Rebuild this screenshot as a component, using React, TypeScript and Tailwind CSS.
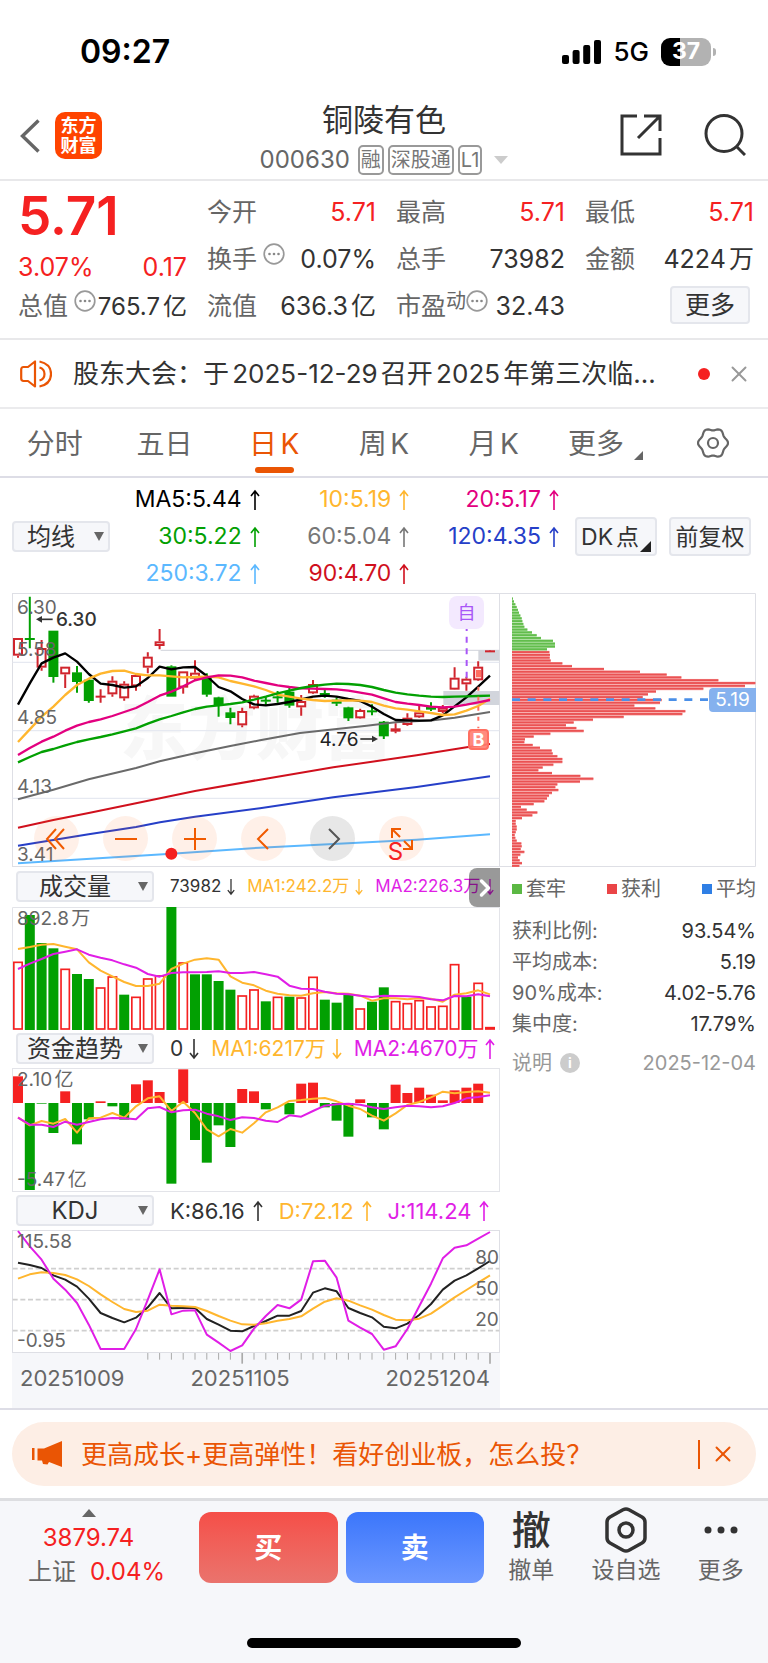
import { useState } from "react";
import type { ReactNode } from "react";
import { X, ChevronRight } from "lucide-react";

// horizontal distance between two trading days, in chart units (3 units = 1px)
const STEP = 35.4;
const xAt = (i: number) => 54 + STEP * i;

const UP = "#d0252d";
const DOWN = "#02a002";

type Candle = [dir: "u" | "d", high: number, top: number, bottom: number, low: number];

const candles: Candle[] = [
  ["u", 144, 144, 197, 203],
  ["d", 20, 145, 149, 175],
  ["u", 150, 174, 233, 242],
  ["d", 123, 123, 260, 278],
  ["u", 230, 230, 253, 294],
  ["d", 228, 248, 275, 308],
  ["d", 268, 270, 332, 338],
  ["u", 298, 318, 322, 338],
  ["u", 259, 272, 313, 320],
  ["u", 274, 281, 325, 332],
  ["u", 250, 255, 289, 302],
  ["u", 187, 200, 233, 250],
  ["u", 117, 154, 168, 178],
  ["d", 226, 230, 319, 319],
  ["u", 244, 244, 293, 311],
  ["u", 211, 248, 266, 270],
  ["d", 250, 262, 313, 320],
  ["d", 320, 323, 346, 380],
  ["d", 353, 368, 383, 403],
  ["u", 353, 363, 406, 412],
  ["u", 314, 317, 355, 358],
  ["d", 320, 330, 334, 345],
  ["d", 303, 320, 324, 338],
  ["d", 290, 306, 346, 353],
  ["u", 315, 333, 352, 377],
  ["u", 270, 282, 310, 312],
  ["d", 296, 310, 314, 323],
  ["d", 322, 330, 340, 348],
  ["d", 350, 353, 384, 393],
  ["u", 356, 360, 385, 386],
  ["d", 343, 362, 366, 376],
  ["d", 393, 396, 438, 447],
  ["u", 400, 416, 424, 430],
  ["u", 370, 383, 405, 407],
  ["u", 347, 367, 382, 384],
  ["d", 337, 352, 358, 363],
  ["u", 345, 353, 366, 370],
  ["u", 232, 263, 299, 300],
  ["u", 260, 266, 283, 302],
  ["u", 214, 230, 271, 273],
  ["u", 181, 182, 186, 186],
];

const ma5 = [
  344, 280, 220, 203, 190, 215, 252, 281, 285, 293, 289, 264, 230, 238, 232, 231, 258, 291, 304, 327, 343, 346, 342,
  336, 328, 320, 317, 320, 327, 333, 350, 372, 390, 391, 392, 391, 376, 349, 322, 290, 257,
];
const ma10 = [
  456, 418, 380, 350, 315, 285, 266, 251, 243, 242, 252, 256, 256, 259, 262, 261, 260, 262, 273, 281, 289, 300, 314,
  320, 326, 330, 333, 332, 331, 332, 336, 347, 355, 359, 364, 369, 375, 373, 362, 348, 326,
];
const ma20 = [
  495, 474, 455, 440, 422, 407, 396, 388, 378, 366, 354, 336, 317, 305, 289, 271, 262, 256, 257, 262, 272, 279, 286,
  291, 295, 296, 297, 298, 302, 308, 314, 325, 336, 341, 345, 350, 352, 350, 344, 337, 330,
];
const ma30 = [
  517, 501, 486, 477, 466, 456, 448, 441, 433, 424, 415, 401, 388, 378, 367, 357, 350, 346, 342, 337, 329, 320, 310,
  302, 294, 288, 284, 281, 282, 285, 291, 300, 308, 313, 317, 320, 321, 320, 319, 318, 317,
];

const volumes: ["u" | "d", number][] = [
  ["u", 275], ["d", 135], ["d", 219], ["d", 235], ["u", 296], ["d", 312], ["d", 327], ["u", 352], ["u", 319],
  ["d", 374], ["u", 380], ["u", 325], ["u", 316], ["d", 111], ["u", 277], ["d", 313], ["d", 313], ["d", 333],
  ["d", 359], ["u", 376], ["u", 358], ["d", 394], ["u", 380], ["d", 380], ["u", 382], ["u", 320], ["d", 389],
  ["d", 398], ["d", 374], ["u", 415], ["d", 395], ["d", 352], ["u", 393], ["u", 399], ["u", 390], ["u", 409],
  ["u", 407], ["u", 282], ["d", 380], ["u", 338], ["u", 471],
];
const volMa1 = [
  237, 231, 224, 222, 230, 238, 277, 302, 319, 336, 348, 348, 341, 297, 281, 269, 265, 269, 319, 338, 346, 362, 371,
  376, 377, 370, 366, 370, 371, 377, 392, 385, 385, 388, 385, 386, 395, 374, 370, 361, 373,
];
const volMa2 = [
  297, 281, 267, 252, 245, 238, 254, 263, 271, 283, 293, 312, 320, 309, 307, 307, 306, 304, 309, 309, 306, 313, 320,
  347, 356, 357, 365, 371, 373, 377, 381, 377, 378, 379, 381, 388, 391, 378, 379, 373, 379,
];

const funds = [
  621, 962, 703, 791, 666, 825, 750, 696, 711, 751, 645, 633, 668, 943, 600, 812, 880, 768, 833, 659, 666, 720, 701,
  735, 643, 640, 714, 754, 802, 690, 744, 780, 646, 671, 655, 676, 693, 663, 655, 643, 701,
];
const fundMa1 = [
  744, 768, 755, 763, 749, 790, 747, 745, 731, 745, 711, 687, 681, 725, 697, 731, 780, 801, 779, 790, 762, 729, 714,
  695, 692, 688, 686, 696, 709, 719, 739, 754, 732, 707, 698, 684, 667, 672, 668, 666, 670,
];
const fundMa2 = [
  745, 766, 766, 773, 757, 766, 758, 750, 746, 747, 750, 717, 713, 729, 723, 721, 733, 741, 752, 744, 746, 754, 758,
  738, 742, 725, 709, 705, 703, 706, 714, 719, 714, 709, 711, 714, 711, 701, 687, 683, 678,
];

const kLine = [
  219, 226, 235, 257, 270, 291, 327, 370, 385, 398, 384, 353, 310, 356, 355, 355, 388, 405, 423, 425, 409, 394, 378,
  378, 364, 309, 296, 305, 355, 370, 383, 411, 416, 402, 376, 343, 300, 273, 257, 236, 214,
];
const dLine = [
  267, 254, 248, 250, 256, 269, 289, 314, 337, 358, 367, 363, 345, 348, 350, 352, 364, 379, 393, 404, 405, 401, 393,
  388, 380, 357, 336, 326, 333, 347, 360, 376, 390, 392, 387, 372, 348, 323, 301, 279, 257,
];
const jLine = [
  124, 170, 210, 267, 300, 340, 405, 478, 478, 478, 418, 330, 239, 374, 363, 362, 435, 459, 484, 467, 417, 379, 346,
  356, 330, 215, 213, 264, 393, 414, 433, 480, 470, 418, 350, 282, 206, 174, 167, 147, 127,
];

// cost distribution, top price first; the first 19 rows are above the current price
const costs = [
  39, 42, 46, 50, 54, 57, 61, 65, 67, 70, 73, 82, 96, 110, 123, 159, 165, 165, 141, 148, 150, 149, 152, 187, 216, 312,
  420, 500, 544, 655, 766, 735, 610, 468, 444, 428, 485, 480, 403, 466, 556, 547, 371, 279, 221, 198, 229, 251, 151,
  101, 75, 73, 98, 120, 155, 158, 172, 187, 187, 160, 128, 115, 156, 241, 280, 240, 172, 166, 175, 156, 147, 141, 133,
  101, 63, 80, 112, 97, 66, 47, 47, 50, 50, 47, 44, 46, 50, 64, 65, 62, 73, 61, 54, 59, 66, 58,
];

const gearPath =
  Array.from({ length: 72 }, (_, i) => {
    const a = (i * 5 * Math.PI) / 180;
    const r = 13.8 + 1.2 * Math.cos(6 * a);
    return `${i ? "L" : "M"}${(16 + r * Math.cos(a)).toFixed(2)} ${(16 + r * Math.sin(a)).toFixed(2)}`;
  }).join("") + "Z";

const Series = ({ data, color, width = 6 }: { data: number[]; color: string; width?: number }) => (
  <polyline
    points={data.map((y, i) => `${xAt(i)},${y}`).join(" ")}
    fill="none"
    stroke={color}
    strokeWidth={width}
    strokeLinejoin="round"
  />
);

const Arrow = ({ down = false, className = "h-6 w-[10px]" }: { down?: boolean; className?: string }) => (
  <svg viewBox="0 0 10 24" className={className} fill="none" stroke="currentColor" strokeWidth="1.6">
    {down ? <path d="M5 2v19M1 16l4 5 4-5" /> : <path d="M5 22V3M1 8l4-5 4 5" />}
  </svg>
);

const Dots = () => (
  <svg viewBox="0 0 22 22" className="size-[22px] shrink-0 -translate-y-[6px]" fill="none" stroke="#999">
    <circle cx="11" cy="11" r="9.8" strokeWidth="1.7" />
    <g fill="#888" stroke="none">
      <circle cx="6.5" cy="11" r="1.3" />
      <circle cx="11" cy="11" r="1.3" />
      <circle cx="15.5" cy="11" r="1.3" />
    </g>
  </svg>
);

const StatusBar = () => (
  <div className="flex h-[98px] items-center justify-between pt-[5px] pr-[52px] pl-20">
    <span className="text-[32px] font-semibold text-black">09:27</span>
    <div className="flex items-center">
      <svg viewBox="0 0 39 24" className="h-6 w-[39px]">
        <rect x="0" y="15" width="7" height="9" rx="2" />
        <rect x="10.6" y="10" width="7" height="14" rx="2" />
        <rect x="21.2" y="5" width="7" height="19" rx="2" />
        <rect x="32" y="0" width="7" height="24" rx="2" />
      </svg>
      <span className="ml-3 text-[26px] font-medium text-black">5G</span>
      <div className="relative ml-3 flex h-7 w-[50px] items-center justify-center overflow-hidden rounded-[9px] bg-[linear-gradient(90deg,#000_37%,#b2b2b2_37%)]">
        <span className="text-[23px] font-bold text-white">37</span>
      </div>
      <div className="ml-[2px] h-2 w-[3px] rounded-r-full bg-[#b2b2b2]" />
    </div>
  </div>
);

const Badge = ({ children }: { children: ReactNode }) => (
  <span className="flex h-[30px] items-center rounded-[5px] border-2 border-[#999] px-px text-xl text-[#777]">
    {children}
  </span>
);

const Header = () => (
  <header className="grid h-[83px] grid-cols-[1fr_auto_1fr] border-b-2 border-[#e8e8ea]">
    <div className="flex items-start pt-[14px] pl-5">
      <button aria-label="返回" className="mr-[15px] flex h-[48px] items-center text-[#666]">
        <svg viewBox="0 0 20 34" className="h-[34px] w-5" fill="none" stroke="currentColor" strokeWidth="3.4">
          <path d="M18.5 1.5L2.5 17l16 15.5" />
        </svg>
      </button>
      <div className="flex size-[47px] flex-col items-center justify-center rounded-[10px] bg-[#ff4400] text-lg leading-5 font-bold text-white">
        <span>东方</span>
        <span>财富</span>
      </div>
    </div>
    <div className="flex flex-col items-center">
      <h1 className="text-[31px] leading-[44px] text-[#333]">铜陵有色</h1>
      <div className="flex items-center gap-1 text-[#666]">
        <span className="mr-1 text-2xl leading-9">000630</span>
        <Badge>融</Badge>
        <Badge>深股通</Badge>
        <Badge>L1</Badge>
        <svg viewBox="0 0 14 8" className="ml-2 h-2 w-[14px]" fill="#ccc">
          <path d="M0 0h14L7 8z" />
        </svg>
      </div>
    </div>
    <div className="flex items-start justify-end gap-[42px] pt-4 pr-[22px]">
      <button aria-label="分享">
        <svg viewBox="0 0 42 42" className="size-[42px]" fill="none" stroke="#333" strokeWidth="3">
          <path d="M17 2H2v38h38V24M24 2h16v15M40 2L18 24" />
        </svg>
      </button>
      <button aria-label="搜索">
        <svg viewBox="0 0 42 42" className="size-[42px]" fill="none" stroke="#333" strokeWidth="3">
          <circle cx="20" cy="19.5" r="18" />
          <path d="M32 32l9 9" />
        </svg>
      </button>
    </div>
  </header>
);

const Stat = ({ label, value, red, extra }: { label: string; value: string; red?: boolean; extra?: ReactNode }) => (
  <div className="flex h-[47px] items-center whitespace-nowrap">
    <span className="text-[#666]">{label}</span>
    {extra}
    <span className={`ml-auto ${red ? "text-[#f52121]" : "text-[#333]"}`}>{value}</span>
  </div>
);

const Quote = () => (
  <section className="grid grid-cols-4 gap-x-5 border-b-2 border-[#e8e8ea] pt-2 pr-[14px] pb-2 pl-[18px] text-[25px]">
    <div>
      <div className="text-[53px] leading-[54px] font-semibold text-[#f52121]">5.71</div>
      <div className="flex h-10 items-end justify-between leading-8 text-[#f52121]">
        <span>3.07%</span>
        <span>0.17</span>
      </div>
      <div className="flex h-[47px] items-center whitespace-nowrap">
        <span className="mr-[6px] text-[#666]">总值</span>
        <Dots />
        <span className="ml-auto text-2xl text-[#333]">765.7亿</span>
      </div>
    </div>
    <div>
      <Stat label="今开" value="5.71" red />
      <Stat label="换手" value="0.07%" extra={<span className="ml-[6px]"><Dots /></span>} />
      <Stat label="流值" value="636.3亿" />
    </div>
    <div>
      <Stat label="最高" value="5.71" red />
      <Stat label="总手" value="73982" />
      <Stat
        label="市盈"
        value="32.43"
        extra={
          <>
            <span className="-translate-y-[6px] text-xl text-[#666]">动</span>
            <Dots />
          </>
        }
      />
    </div>
    <div>
      <Stat label="最低" value="5.71" red />
      <Stat label="金额" value="4224万" />
      <div className="flex h-[43px] items-center justify-end pr-1">
        <button className="h-[38px] w-20 rounded border-2 border-[#e4e6ec] bg-[#f6f7fa] leading-8 text-[#333]">更多</button>
      </div>
    </div>
  </section>
);

const Notice = () => (
  <div className="flex h-[69px] items-center border-b-2 border-[#ebebed] pr-4 pl-5">
    <svg viewBox="0 0 32 28" className="h-7 w-8 shrink-0" fill="none" stroke="#ea5504" strokeWidth="2.2">
      <path d="M15 1.5v25L8 21H3.5Q1.2 21 1.2 18.5v-9Q1.2 7 3.5 7H8z" strokeLinejoin="round" />
      <path d="M19.5 7.5Q24.5 9 24.5 14t-5 6.500M19.500 1.500Q31 4 31 14T19.500 26.500" />
    </svg>
    <p className="ml-[21px] min-w-0 flex-1 text-[26px] whitespace-nowrap text-[#333]">
      股东大会：于2025-12-29召开2025年第三次临...
    </p>
    <span className="size-3 shrink-0 rounded-full bg-[#f52121]" />
    <button aria-label="关闭" className="ml-4 text-[#999]">
      <X className="size-[26px]" strokeWidth={1.8} />
    </button>
  </div>
);

const tabs = ["分时", "五日", "日K", "周K", "月K"];

const Tabs = () => {
  const [active, setActive] = useState("日K");
  return (
    <nav className="grid h-[69px] grid-cols-7 border-b-2 border-[#dddde6] text-[28px] text-[#666]">
      {tabs.map((tab) => (
        <button
          key={tab}
          onClick={() => setActive(tab)}
          className={`flex flex-col items-center justify-between pt-[14px] pb-[3px] leading-[42px] ${
            active === tab ? "text-[#ea5504]" : ""
          }`}
        >
          {tab}
          <span className={`h-[6px] w-[39px] rounded-full ${active === tab ? "bg-[#ea5504]" : ""}`} />
        </button>
      ))}
      <button className="flex items-start justify-center gap-[10px] pt-[14px] pl-1 leading-[42px]">
        更多
        <svg viewBox="0 0 9 9" className="mt-7 size-[9px]" fill="currentColor">
          <path d="M9 0v9H0z" />
        </svg>
      </button>
      <button aria-label="设置" className="flex items-center justify-center">
        <svg viewBox="0 0 32 32" className="size-8" fill="none" stroke="#666" strokeWidth="2.2">
          <path d={gearPath} />
          <circle cx="16" cy="16" r="5" />
        </svg>
      </button>
    </nav>
  );
};

const Picker = ({ label, options, className }: { label: string; options: string[]; className: string }) => (
  <div className={`relative shrink-0 ${className}`}>
    <select
      aria-label={label}
      className="h-[31px] w-full appearance-none rounded border-2 border-[#e4e6ec] bg-[#f6f7fa] pr-5 text-center text-2xl leading-[27px] text-[#333] [text-align-last:center]"
    >
      {options.map((o) => (
        <option key={o}>{o}</option>
      ))}
    </select>
    <svg viewBox="0 0 10 9" className="pointer-events-none absolute top-[11px] right-[6px] h-[9px] w-[10px]" fill="#666">
      <path d="M0 0h10L5 9z" />
    </svg>
  </div>
);

const averages = [
  ["MA5:5.44", "text-black"],
  ["10:5.19", "text-[#ffb62e]"],
  ["20:5.17", "text-[#e3007f]"],
  ["30:5.22", "text-[#02a002]"],
  ["60:5.04", "text-[#777]"],
  ["120:4.35", "text-[#263fc8]"],
  ["250:3.72", "text-[#5bb8ff]"],
  ["90:4.70", "text-[#d0101d]"],
];

const Averages = () => (
  <section className="flex items-center pt-[3px] pr-[17px] pb-px pl-3">
    <Picker label="主图指标" options={["均线", "BOLL"]} className="w-[98px]" />
    <div className="grid flex-1 grid-cols-3 text-[23px]">
      {averages.map(([text, color]) => (
        <span key={text} className={`flex h-[37px] items-center justify-end gap-2 whitespace-nowrap ${color}`}>
          {text}
          <Arrow />
        </span>
      ))}
    </div>
    <button className="relative ml-4 h-[39px] w-[82px] rounded border-2 border-[#e4e6ec] bg-[#f6f7fa] pr-3 text-[23px] leading-8 whitespace-nowrap text-[#333]">
      DK点
      <svg viewBox="0 0 11 11" className="absolute right-1 bottom-[2px] size-[11px]" fill="#222">
        <path d="M11 0v11H0z" />
      </svg>
    </button>
    <button className="ml-3 h-[39px] w-[82px] rounded border-2 border-[#e4e6ec] bg-[#f6f7fa] text-[23px] leading-8 whitespace-nowrap text-[#333]">
      前复权
    </button>
  </section>
);

const RoundButton = ({ label, gray, children }: { label: string; gray?: boolean; children: ReactNode }) => (
  <button
    aria-label={label}
    className={`flex size-[45px] items-center justify-center rounded-full ${
      gray ? "bg-[#888]/20 text-[#555]" : "bg-[#ff6a1f]/10 text-[#f05a00]"
    }`}
  >
    <svg viewBox="0 0 24 24" className="size-6" fill="none" stroke="currentColor" strokeWidth="2">
      {children}
    </svg>
  </button>
);

const MainChart = () => (
  <div className="relative">
    <div
      aria-hidden="true"
      className="absolute inset-x-0 top-[94px] text-center text-[68px] leading-[84px] font-black text-[#f7f7f7]"
    >
      东方财富
    </div>
    <svg viewBox="36 9 1464 822" className="relative block w-full" fill="none">
      <rect x="37.5" y="10.500" width="1461" height="819" stroke="#dedfe5" strokeWidth="3" />
      <path d="M38 217H1498M38 422H1498M38 625H1498" stroke="#e6e9f1" strokeWidth="4" />
      <path d="M482 181H1498" stroke="#d9dbe1" strokeWidth="4" />
      <rect x="1435" y="180" width="63" height="32" fill="#d2d5dc" />
      <rect x="1330" y="303" width="168" height="42" fill="#d2d5dc" />

      {candles.map(([dir, high, top, bottom, low], i) => {
        const x = xAt(i);
        const color = dir === "u" ? UP : DOWN;
        const hollow = dir === "u" && bottom - top > 8;
        return (
          <g key={i} stroke={color} strokeWidth="6">
            <path d={`M${x} ${high}V${top}M${x} ${bottom}V${low}`} />
            {hollow ? (
              <rect x={x - 12} y={top + 3} width="24" height={bottom - top - 6} fill="#fff" />
            ) : (
              <rect x={x - 15} y={top - 1} width="30" height={bottom - top + 2} fill={color} stroke="none" />
            )}
          </g>
        );
      })}
      <rect x="1428" y="240" width="15" height="22" fill="#ff6f61" />

      <path
        d="M54 820L514 791L780 773L1000 762L1250 749L1470 733"
        stroke="#5bb8ff"
        strokeWidth="6"
      />
      <path
        d="M54 767L160 750L266 733L408 711L480 697L585 680L780 655L1000 622L1250 591L1470 559"
        stroke="#263fc8"
        strokeWidth="6"
      />
      <path
        d="M54 713L160 690L266 669L408 640L585 603L780 569L1000 532L1250 496L1400 472L1470 462"
        stroke="#d0101d"
        strokeWidth="6"
      />
      <path
        d="M54 628L160 599L266 568L408 534L479 514L585 490L691 468L780 451L900 429L1100 407L1187 397L1300 391L1364 383L1470 366"
        stroke="#6a6a6a"
        strokeWidth="6"
      />
      <Series data={ma5} color="#000" width={7} />
      <Series data={ma10} color="#ffb62e" width={7} />
      <Series data={ma20} color="#e3007f" width={7} />
      <Series data={ma30} color="#02a002" width={7} />

      <path d="M1400 117V264" stroke="#a855f7" strokeWidth="6" strokeDasharray="18 17" strokeDashoffset="12" />
      <path d="M1435 290V415" stroke="#ff6f61" strokeWidth="6" strokeDasharray="12 18" />

      <path d="M158 88H120" stroke="#333" strokeWidth="5" />
      <path d="M108 88l18-10v20z" fill="#333" />
      <path d="M1081 447H1120" stroke="#333" strokeWidth="5" />
      <path d="M1134 447l-18-10v20z" fill="#333" />
      <circle cx="514" cy="791" r="18" fill="#f52121" />
    </svg>

    {/* Price axis */}
    <div className="pointer-events-none absolute inset-0 flex flex-col pl-[5px] text-[19px] leading-6 text-[#666]">
      <span className="absolute top-[3px]">6.30</span>
      <span className="flex flex-1 items-end">5.58</span>
      <span className="flex flex-1 items-end">4.85</span>
      <span className="flex flex-1 items-end">4.13</span>
      <span className="flex flex-1 items-end">3.41</span>
    </div>
    <span className="absolute top-[15px] left-[9%] text-[19px] leading-6 font-medium text-[#333]">6.30</span>
    <span className="absolute top-[135px] left-[63%] text-[19px] leading-6 text-[#222]">4.76</span>
    <span className="absolute top-[3px] right-4 flex h-[33px] w-[35px] items-center justify-center rounded-lg bg-[#f3e9fe] text-lg text-[#a855f7]">
      自
    </span>
    <span className="absolute top-[136px] right-[11px] flex size-[21px] items-center justify-center rounded border-2 border-[#ff6f61] bg-[#ff7e70]/90 text-lg leading-none font-bold text-white">
      B
    </span>

    <div className="absolute bottom-[6px] left-[22px] flex gap-6">
      <RoundButton label="最早">
        <path d="M11 2L2 12l9 10M19 2l-9 10 9 10" />
      </RoundButton>
      <RoundButton label="缩小">
        <path d="M1 12h22" />
      </RoundButton>
      <RoundButton label="放大">
        <path d="M1 12h22M12 1v22" />
      </RoundButton>
      <RoundButton label="左移">
        <path d="M16 2L6 12l10 10" />
      </RoundButton>
      <RoundButton label="右移" gray>
        <path d="M8 2l10 10L8 22" />
      </RoundButton>
      <RoundButton label="全屏">
        <path d="M2 11V2h9M2 2l8 8M22 13v9h-9M22 22l-8-8" />
      </RoundButton>
    </div>
    <span className="pointer-events-none absolute bottom-px left-[77%] text-2xl leading-7 text-[#f52121]">S</span>
  </div>
);

const VolumeChart = () => (
  <div className="relative">
    <svg viewBox="36 111 1464 369" className="block w-full" fill="none">
      <path d="M37.500 480V112.500H1498.500V480" stroke="#e3e4e9" strokeWidth="3" />
      {volumes.map(([dir, top], i) =>
        dir === "u" ? (
          <rect
            key={i}
            x={xAt(i) - 12.5}
            y={top + 2}
            width="25"
            height={478 - top - 3}
            fill="#fff"
            stroke="#f52121"
            strokeWidth="5"
          />
        ) : (
          <rect key={i} x={xAt(i) - 15} y={top} width="30" height={480 - top} fill={DOWN} />
        )
      )}
      <Series data={volMa1} color="#ffb62e" />
      <Series data={volMa2} color="#e01ee6" />
    </svg>
    <span className="absolute top-0 left-[5px] text-[19px] leading-6 text-[#666]">892.8万</span>
  </div>
);

const FundChart = () => (
  <div className="relative">
    <svg viewBox="36 596 1464 372" className="block w-full" fill="none">
      <rect x="37.500" y="597.500" width="1461" height="369" stroke="#e3e4e9" strokeWidth="3" />
      {funds.map((y, i) => (
        <rect
          key={i}
          x={xAt(i) - 15}
          y={Math.min(y, 701)}
          width="30"
          height={Math.abs(y - 701)}
          fill={y < 701 ? "#f52121" : DOWN}
        />
      ))}
      <Series data={fundMa1} color="#ffb62e" />
      <Series data={fundMa2} color="#e01ee6" />
    </svg>
    <div className="absolute inset-y-0 left-[5px] flex flex-col justify-between text-[19px] leading-6 text-[#666]">
      <span>2.10亿</span>
      <span>-5.47亿</span>
    </div>
  </div>
);

const KdjChart = () => (
  <div className="relative">
    <svg viewBox="36 121 1464 369" className="block w-full" fill="none">
      <rect x="37.500" y="122.500" width="1461" height="366" stroke="#dedfe5" strokeWidth="3" />
      <path d="M38 237H1498M38 330H1498M38 423H1498" stroke="#cfcfcf" strokeWidth="5" strokeDasharray="15 8" />
      <Series data={kLine} color="#222" />
      <Series data={dLine} color="#ffb62e" />
      <Series data={jLine} color="#e01ee6" />
    </svg>
    <div className="absolute inset-y-0 left-[5px] flex flex-col justify-between text-[19px] leading-6 text-[#666]">
      <span>115.58</span>
      <span>-0.95</span>
    </div>
    <div className="absolute top-3 right-[1px] flex flex-col text-[19px] leading-[31px] text-[#666]">
      <span>80</span>
      <span>50</span>
      <span>20</span>
    </div>
  </div>
);

const TimeAxis = () => (
  <div className="h-[55px] bg-[#f6f7fa]">
    <svg viewBox="36 490 1464 33" className="block w-full" stroke="#aaa">
      {Array.from({ length: 30 }, (_, n) => n + 11).map((i) => {
        const major = i === 19 || i === 40;
        return <path key={i} d={`M${xAt(i)} 490v${major ? 32 : 20}`} strokeWidth={major ? 5 : 3} />;
      })}
    </svg>
    <div className="flex pr-[10px] pl-2 text-[22px] leading-7 text-[#666]">
      <span>20251009</span>
      <span className="ml-[66px]">20251105</span>
      <span className="ml-auto">20251204</span>
    </div>
  </div>
);

const Legend = ({ color, children }: { color: string; children: ReactNode }) => (
  <span className="flex items-center gap-1">
    <span className={`size-[10px] ${color}`} />
    {children}
  </span>
);

const costRows = [
  ["获利比例:", "93.54%"],
  ["平均成本:", "5.19"],
  ["90%成本:", "4.02-5.76"],
  ["集中度:", "17.79%"],
];

const CostPanel = () => (
  <aside className="text-xl text-[#666]">
    <div className="relative">
      <svg viewBox="0 9 768 822" className="block w-full" fill="none">
        <path d="M0 10.500H766.500V829.500H0" stroke="#dedfe5" strokeWidth="3" />
        {costs.map((x, i) => (
          <g key={i}>
            <rect x="36" y={22 + i * 8.442} width={x - 36} height="8.500" fill={i < 19 ? "#a5dc96" : "#f7a3a3"} />
            <rect x="36" y={23 + i * 8.442} width={x - 36} height="5.500" fill={i < 19 ? "#62bd4c" : "#ea5253"} />
          </g>
        ))}
        <path d="M36 329H630" stroke="#4a8fe8" strokeWidth="8" strokeDasharray="24 23" />
      </svg>
      <span className="absolute top-[95px] right-0 flex h-6 w-[47px] items-center justify-center rounded-l bg-[#85b1ee] text-[19px] text-white">
        5.19
      </span>
    </div>
    <div className="pl-3">
      <div className="flex h-11 items-center justify-between">
        <Legend color="bg-[#5bb843]">套牢</Legend>
        <Legend color="bg-[#ea4547]">获利</Legend>
        <Legend color="bg-[#2f7fe5]">平均</Legend>
      </div>
      <dl className="pt-1">
        {costRows.map(([name, value]) => (
          <div key={name} className="flex h-[31px] items-center justify-between">
            <dt>{name}</dt>
            <dd className="text-[#333]">{value}</dd>
          </div>
        ))}
      </dl>
      <div className="mt-2 flex h-[31px] items-center text-[#999]">
        说明
        <span className="ml-2 flex size-5 items-center justify-center rounded-full bg-[#ccc] text-sm font-bold text-white">
          i
        </span>
        <span className="ml-auto">2025-12-04</span>
      </div>
    </div>
  </aside>
);

const Charts = () => (
  <section className="grid grid-cols-[488fr_256fr] border-b-2 border-[#dddde6] px-3">
    <div className="min-w-0">
      <MainChart />
      <div className="relative flex h-10 items-center pl-1 text-[17px] whitespace-nowrap [text-autospace:no-autospace]">
        <Picker label="副图一" options={["成交量", "成交额"]} className="w-[138px]" />
        <span className="ml-4 flex items-center gap-[6px] text-[#333]">
          73982
          <Arrow down className="h-5 w-2" />
        </span>
        <span className="ml-3 flex items-center gap-[6px] text-[#ffb62e]">
          MA1:242.2万
          <Arrow down className="h-5 w-2" />
        </span>
        <span className="ml-3 flex items-center gap-[6px] text-[#e01ee6]">
          MA2:226.3万
          <Arrow down className="h-5 w-2" />
        </span>
        <button
          aria-label="收起"
          className="absolute top-px right-0 flex h-[39px] w-[31px] items-center justify-center rounded-l-lg bg-black/40 text-white"
        >
          <ChevronRight className="size-7" strokeWidth={3} />
        </button>
      </div>
      <VolumeChart />
      <div className="flex h-[38px] items-center pl-1 text-[21px] whitespace-nowrap [text-autospace:no-autospace]">
        <Picker label="副图二" options={["资金趋势", "MACD"]} className="w-[138px]" />
        <span className="ml-4 flex items-center gap-[6px] text-[#333]">
          0
          <Arrow down />
        </span>
        <span className="ml-3 flex items-center gap-[6px] text-[#ffb62e]">
          MA1:6217万
          <Arrow down />
        </span>
        <span className="ml-3 flex items-center gap-[6px] text-[#e01ee6]">
          MA2:4670万
          <Arrow />
        </span>
      </div>
      <FundChart />
      <div className="flex h-[38px] items-center pl-1 text-[22px] whitespace-nowrap">
        <Picker label="副图三" options={["KDJ", "RSI"]} className="w-[138px]" />
        <span className="ml-4 flex items-center gap-2 text-[#333]">
          K:86.16
          <Arrow />
        </span>
        <span className="ml-4 flex items-center gap-2 text-[#ffb62e]">
          D:72.12
          <Arrow />
        </span>
        <span className="ml-4 flex items-center gap-2 text-[#e01ee6]">
          J:114.24
          <Arrow />
        </span>
      </div>
      <KdjChart />
      <TimeAxis />
    </div>
    <CostPanel />
  </section>
);

const Banner = () => (
  <div className="border-b-[3px] border-[#dddee1] px-3 pt-3 pb-3">
    <div className="flex h-16 items-center rounded-full bg-[#fdeee5] pr-5 pl-[19px] text-[#ea5504]">
      <svg viewBox="0 0 32 26" className="h-[26px] w-8 shrink-0" fill="currentColor">
        <path d="M1 7h2.500v12H1zM6.500 7.500H13L31 0v26l-13-5-1.500 2.500-4.500-.5-1-3.500H6.500z" />
      </svg>
      <a href="#topic" className="ml-[18px] flex-1 text-[26px] whitespace-nowrap">
        更高成长+更高弹性！看好创业板，怎么投？
      </a>
      <span className="h-[29px] w-[2px] bg-[#ea5504]" />
      <button aria-label="关闭" className="ml-[10px]">
        <X className="size-[26px]" strokeWidth={1.8} />
      </button>
    </div>
  </div>
);

const BottomBar = () => (
  <footer className="flex-1 bg-[#f6f7fa] pt-[6px] pb-4">
    <div className="flex">
      <button className="flex w-[199px] shrink-0 flex-col pl-7 text-2xl leading-[34px] whitespace-nowrap text-[#f52121]">
        <span className="flex w-[121px] flex-col items-center">
          <svg viewBox="0 0 14 8" className="mt-[2px] mb-1 h-2 w-[14px]" fill="#666">
            <path d="M7 0l7 8H0z" />
          </svg>
          3879.74
        </span>
        <span className="flex gap-[14px]">
          <span className="text-[#666]">上证</span>
          0.04%
        </span>
      </button>
      <div className="mt-[5px] flex flex-1 gap-2 text-[28px] font-bold text-white">
        <button className="h-[71px] flex-1 rounded-xl bg-linear-to-b from-[#f54e48] to-[#ea736d]">买</button>
        <button className="h-[71px] flex-1 rounded-xl bg-linear-to-b from-[#3b76fb] to-[#6c97ff]">卖</button>
      </div>
      <div className="flex w-[284px] shrink-0 text-[23px] text-[#666]">
        <button className="flex flex-1 flex-col items-center">
          <span className="text-[39px] leading-[46px] font-medium text-[#333]">撤</span>
          <span className="leading-[34px]">撤单</span>
        </button>
        <button className="flex flex-1 flex-col items-center">
          <svg viewBox="0 0 42 46" className="h-[46px] w-[42px]" fill="none" stroke="#333" strokeWidth="3.500">
            <path
              d="M18 2.800Q21 1.200 24 2.800L37 10Q40 11.800 40 15v16q0 3.200-3 5L24 43.200q-3 1.600-6 0L5 36q-3-1.800-3-5V15q0-3.200 3-5z"
              strokeLinejoin="round"
            />
            <circle cx="21" cy="23" r="7" />
          </svg>
          <span className="leading-[34px]">设自选</span>
        </button>
        <button className="flex flex-1 flex-col items-center">
          <svg viewBox="0 0 34 46" className="h-[46px] w-[34px]" fill="#333">
            <circle cx="4" cy="23" r="3.500" />
            <circle cx="17" cy="23" r="3.500" />
            <circle cx="30" cy="23" r="3.500" />
          </svg>
          <span className="leading-[34px]">更多</span>
        </button>
      </div>
    </div>
    <div className="mx-auto mt-[49px] h-[10px] w-[274px] rounded-full bg-black" />
  </footer>
);

const App = () => (
  <div className="flex min-h-screen flex-col bg-white font-['Inter','Noto_Sans_CJK_SC',sans-serif] [text-autospace:normal]">
    <StatusBar />
    <Header />
    <Quote />
    <Notice />
    <Tabs />
    <Averages />
    <Charts />
    <Banner />
    <BottomBar />
  </div>
);

export default App;
